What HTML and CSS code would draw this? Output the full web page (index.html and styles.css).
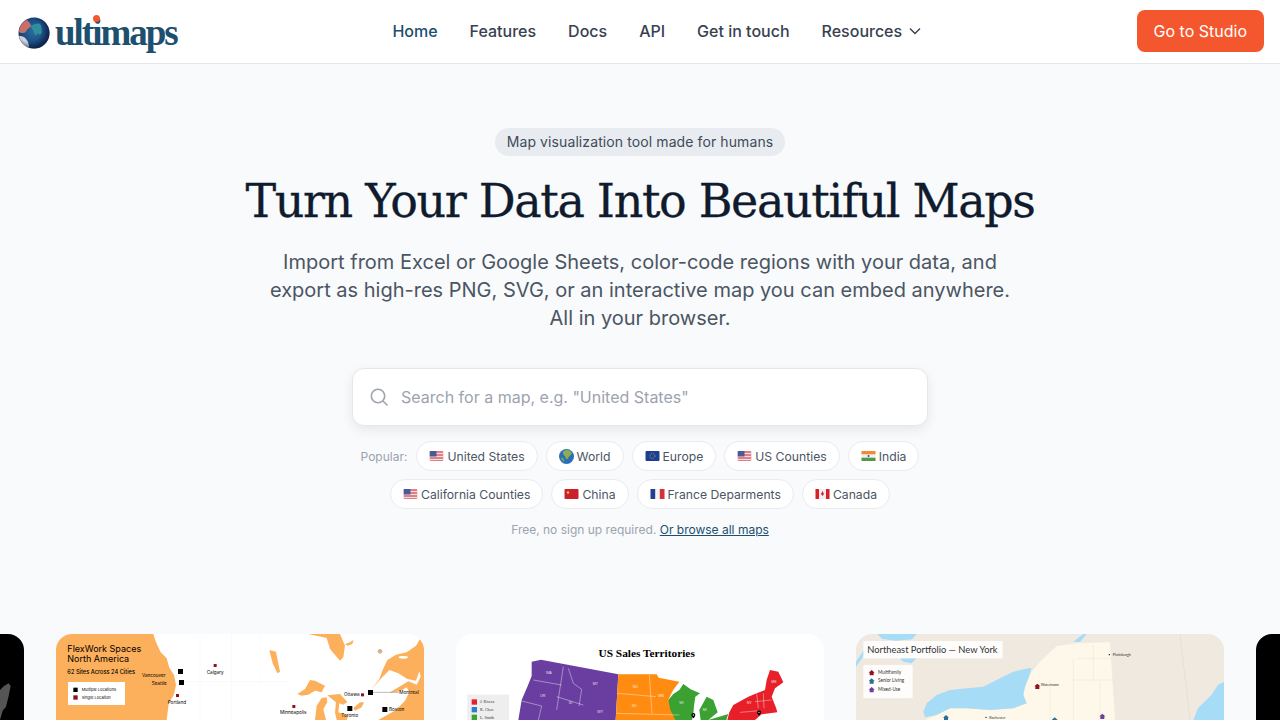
FILE: index.html
```html
<!DOCTYPE html>
<html>
<head>
  <meta charset="UTF-8">
  <title>Ultimaps</title>
  <link rel="stylesheet" href="styles.css">
</head>
<body>
  <svg class="defs" width="0" height="0">
    <defs>
      <symbol id="flag-us" viewBox="0 0 14 10">
        <rect width="14" height="10" rx="1" fill="#e07f88"/>
        <path d="M0 2.500h14M0 5.500h14M0 8.500h14" stroke="#f2dfe2" stroke-width="1.100"/>
        <rect width="7" height="5.500" fill="#4a5a96"/>
      </symbol>
      <radialGradient id="globe-fill" cx="50%" cy="45%" r="60%">
        <stop offset="0" stop-color="#2a6f98"/>
        <stop offset="0.65" stop-color="#1b4a86"/>
        <stop offset="1" stop-color="#122b55"/>
      </radialGradient>
      <radialGradient id="globe-shade" cx="35%" cy="40%" r="70%">
        <stop offset="0.55" stop-color="#0b1c3c" stop-opacity="0"/>
        <stop offset="1" stop-color="#0b1c3c" stop-opacity="0.85"/>
      </radialGradient>
    </defs>
  </svg>

  <header class="topbar">
    <a class="logo">
      <svg class="globe" width="32" height="32" viewBox="0 0 32 32">
        <circle cx="16" cy="16" r="15.500" fill="url(#globe-fill)"/>
        <path d="M1 15C1.500 9 5 4 9 3c2 2 4 4 4 6-1 2-3 2-4 4-1 2-2 3-4 3-1 0-3 0-4-1z" fill="#c96f68"/>
        <path d="M1 19c2 0 5 0 7 3 2 2 3 5 3 8.500C6 29 2 24 1 19z" fill="#cfd3d8"/>
        <path d="M13 9c3-2 6-3 9-2 2 2 1 5 2 8-1 3-3 3-5 1 0 2-1 3-2 2-1-2-1-4-2-5-1-1-2-2-2-4z" fill="#2f8f9f"/>
        <circle cx="16" cy="16" r="15.500" fill="url(#globe-shade)"/>
      </svg>
      <span class="wordmark">ultimaps<i class="logo-dot"></i></span>
    </a>
    <nav class="nav">
      <a class="active">Home</a>
      <a>Features</a>
      <a>Docs</a>
      <a>API</a>
      <a>Get in touch</a>
      <a class="has-caret">Resources
        <svg width="14" height="14" viewBox="0 0 14 14"><path d="M2 4.500l5 5 5-5" fill="none" stroke="#374151" stroke-width="1.400"/></svg>
      </a>
    </nav>
    <a class="studio-btn">Go to Studio</a>
  </header>

  <main>
    <section class="hero">
      <div class="badge">Map visualization tool made for humans</div>
      <h1>Turn Your Data Into Beautiful Maps</h1>
      <p class="lead">Import from Excel or Google Sheets, color-code regions with your data, and<br>export as high-res PNG, SVG, or an interactive map you can embed anywhere.<br>All in your browser.</p>

      <div class="search">
        <svg width="20" height="20" viewBox="0 0 20 20"><circle cx="9" cy="9" r="6.700" fill="none" stroke="#9ca3af" stroke-width="1.600"/><path d="M14 14l4.500 4.500" stroke="#9ca3af" stroke-width="1.600"/></svg>
        <span>Search for a map, e.g. "United States"</span>
      </div>

      <div class="chips">
        <span class="popular">Popular:</span>
        <a class="chip"><svg class="flag" viewBox="0 0 14 10"><use href="#flag-us"/></svg>United States</a>
        <a class="chip"><svg class="flag round" viewBox="0 0 14 14"><circle cx="7" cy="7" r="7" fill="#2a6fb8"/><path d="M4 2c3-2 7-1 8 2-1 2-3 3-4 5-1 1-2 0-2-2-1-1-3-2-2-5z" fill="#8fae4f"/><path d="M2 8c2 0 3 1 3 4-2-1-3-2-3-4z" fill="#7fa83f"/></svg>World</a>
        <a class="chip"><svg class="flag" viewBox="0 0 14 10"><rect width="14" height="10" rx="1" fill="#1c3f94"/><circle cx="7" cy="5" r="2.500" fill="none" stroke="#d9c23a" stroke-width=".7" stroke-dasharray="1 1"/></svg>Europe</a>
        <a class="chip"><svg class="flag" viewBox="0 0 14 10"><use href="#flag-us"/></svg>US Counties</a>
        <a class="chip"><svg class="flag" viewBox="0 0 14 10"><rect width="14" height="10" rx="1" fill="#f4f1ea"/><rect width="14" height="3.300" fill="#f08a38"/><rect y="6.700" width="14" height="3.300" fill="#4f9a4a"/><circle cx="7" cy="5" r="1" fill="#3a4f8f"/></svg>India</a>
      </div>
      <div class="chips second">
        <a class="chip"><svg class="flag" viewBox="0 0 14 10"><use href="#flag-us"/></svg>California Counties</a>
        <a class="chip"><svg class="flag" viewBox="0 0 14 10"><rect width="14" height="10" rx="1" fill="#c9202c"/><circle cx="3.500" cy="3.500" r="1.200" fill="#ecc53a"/></svg>China</a>
        <a class="chip"><svg class="flag" viewBox="0 0 14 10"><rect width="14" height="10" rx="1" fill="#f5f2f2"/><rect width="4.700" height="10" fill="#21408f"/><rect x="9.300" width="4.700" height="10" fill="#d8303a"/></svg>France Deparments</a>
        <a class="chip"><svg class="flag" viewBox="0 0 14 10"><rect width="14" height="10" rx="1" fill="#f5eeee"/><rect width="3.500" height="10" fill="#d9202a"/><rect x="10.500" width="3.500" height="10" fill="#d9202a"/><path d="M7 2l1.500 3-1.500 2-1.500-2z" fill="#d9202a"/></svg>Canada</a>
      </div>

      <p class="note">Free, no sign up required. <a>Or browse all maps</a></p>
    </section>

    <section class="gallery">
      <div class="card black">
        <svg class="map" viewBox="-1032 27 1104 258"><path d="M0 285V195l12-12 14-8 6 8-6 30-8 32-10 12-8 28z" fill="#555"/></svg>
      </div>

      <div class="card">
        <svg class="map" viewBox="168 27 1104 258">
          <rect x="168" y="27" width="1104" height="258" fill="#fff"/>
          <path d="M520 170H860M600 27v258M780 27v150M695 27v258" stroke="#f4f4f4" fill="none" stroke-width="1.500"/>
          <g fill="#fdb05c">
            <path d="M168 27H460l8 25 14 30 18 18 8 28 14 22 6 30-6 28-16 28-6 49H168z"/>
            <path d="M808 75l20 5 12 60-8 5-14-30z"/>
            <g transform="translate(870 27)">
              <path d="M55 0L110 12 120 45 150 80 160 70 165 35 150 0z"/>
              <path d="M165 30l12-4 14-8-4 12-15 5z"/>
              <path d="M392 12L378 35 350 55 318 62 292 78 278 108 268 135 245 165 272 135 298 108 325 118 352 135 378 140 388 112 392 128 380 152 355 142 325 160 298 176 330 172 350 160 358 175 345 200 318 228 265 258H402V12z"/>
              <path d="M22 180L45 165 60 138 75 140 105 155 95 175 75 170 55 182 35 185z"/>
              <path d="M75 258L80 215 95 192 110 190 112 205 100 225 108 258z"/>
              <path d="M112 184L150 180 172 204 160 212 148 208 145 235 175 245 170 258H140L135 235 138 205z"/>
              <path d="M190 222L210 205 222 205 215 220 195 230z"/>
            </g>
          </g>
          <circle cx="1140" cy="79" r="7" fill="#d9b48a"/>
          <ellipse cx="1210" cy="97" rx="14" ry="4" fill="#fff"/>
          <g class="t1">
            <text x="202" y="80" font-size="27">FlexWork Spaces</text>
            <text x="202" y="110" font-size="27">North America</text>
            <text x="202" y="148" font-size="17" font-weight="500">62 Sites Across 24 Cities</text>
          </g>
          <rect x="204" y="171" width="171" height="69" fill="#fff"/>
          <rect x="220" y="188" width="13" height="13"/>
          <rect x="220" y="211" width="13" height="13" fill="#8e1422"/>
          <g class="t1" font-size="12">
            <text x="245" y="198">Multiple Locations</text>
            <text x="245" y="221">Single Location</text>
            <text x="426" y="155" font-size="14">Vancouver</text>
            <text x="455" y="180" font-size="14">Seattle</text>
            <text x="503" y="236" font-size="14">Portland</text>
            <text x="620" y="146" font-size="14">Calgary</text>
            <text x="840" y="268" font-size="14">Minneapolis</text>
            <text x="1032" y="214" font-size="14">Ottawa</text>
            <text x="1198" y="206" font-size="14">Montreal</text>
            <text x="1024" y="277" font-size="14">Toronto</text>
            <text x="1167" y="259" font-size="14">Boston</text>
          </g>
          <g fill="#8e1422">
            <rect x="641" y="117" width="9" height="9"/>
            <rect x="528" y="207" width="9" height="9"/>
            <rect x="877" y="240" width="9" height="9"/>
            <rect x="1083" y="205" width="9" height="9"/>
          </g>
          <rect x="534" y="132" width="15" height="15"/>
          <rect x="537" y="165" width="15" height="15"/>
          <rect x="1104" y="195" width="15" height="15"/>
          <rect x="1042" y="243" width="15" height="15"/>
          <rect x="1147" y="246" width="15" height="15"/>
          <path d="M1119 202h80" stroke="#777" stroke-width="1.500"/>
        </svg>
      </div>

      <div class="card">
        <svg class="map" viewBox="18 27 1104 258">
          <rect x="18" y="27" width="1104" height="258" fill="#fff"/>
          <text class="t2" x="590" y="97" text-anchor="middle" font-size="34">US Sales Territories</text>
          <path d="M245 110l28-6 232 44-8 137H205l10-60 18-42 12-30z" fill="#6a3fa0"/>
          <path d="M505 148h115l6 10 62 12-18 24-15 30 25 36 10 25H497z" fill="#ff8c12"/>
          <path d="M655 225l15-18 18-12 12-18 22 16 28 12-14 10-4 28-2 25-4 17h-50l-15-30z" fill="#3ca234"/>
          <path d="M752 285l-4-30 22-40 20 10 13 37-28 23zM775 285l60-18-6 18z" fill="#3ca234"/>
          <path d="M832 285L838 262 850 240 895 215 920 205 945 195 950 165 960 135 985 140 1000 172 975 190 965 215 978 248 982 262 935 268 915 285z" fill="#e8202a"/>
          <g stroke="#fff" fill="none" stroke-width="1.500" opacity=".8">
            <path d="M250 165l85 15M340 125l-20 130M355 130l15 45 25 18-8 50M320 215l80 25M215 228l60 15-10 42M503 205l115 10M498 265l190 5M598 150l8 115"/>
            <path d="M920 205l5 45M940 205l2 45M915 230l50-5M870 262l60-5"/>
          </g>
          <g class="t3" font-size="11">
            <text x="288" y="148">WA</text><text x="270" y="216">OR</text><text x="428" y="179">MT</text>
            <text x="356" y="237">ID</text><text x="442" y="264">WY</text><text x="548" y="188">ND</text>
            <text x="545" y="245">SD</text><text x="625" y="215">MN</text><text x="688" y="237">WI</text>
            <text x="758" y="258">MI</text><text x="890" y="238">NY</text><text x="964" y="174">ME</text>
          </g>
          <rect x="52" y="209" width="125" height="76" fill="#eeeeee"/>
          <rect x="65" y="223" width="16" height="16" fill="#e8202a"/>
          <rect x="65" y="246" width="16" height="16" fill="#2b7fc9"/>
          <rect x="65" y="269" width="16" height="16" fill="#3ca234"/>
          <g class="t5" font-size="12">
            <text x="90" y="235">J. Rivera</text>
            <text x="90" y="258">K. Chen</text>
            <text x="90" y="281">L. Smith</text>
          </g>
          <path d="M730 264a6 6 0 0 1 6 6c0 4-6 10-6 10s-6-6-6-10a6 6 0 0 1 6-6zM927 256a6 6 0 0 1 6 6c0 4-6 10-6 10s-6-6-6-10a6 6 0 0 1 6-6z"/>
          <circle cx="730" cy="270" r="2" fill="#fff"/><circle cx="927" cy="262" r="2" fill="#fff"/>
        </svg>
      </div>

      <div class="card">
        <svg class="map" viewBox="18 27 1104 258">
          <rect x="18" y="27" width="1104" height="258" fill="#efe9df"/>
          <path d="M82 27h118l-14 16-50 4-40-6zM18 110l30-45 6 10-36 50zM150 100h50l-15 15-25-5zM670 50l30-23h10l-20 24z" fill="#a6dcf6"/>
          <path d="M1122 170l-18 10-20 30-40 40-14 35h92z" fill="#a6dcf6"/>
          <path d="M680 55L620 63 575 105 545 140 525 185 520 210 530 235 490 250 420 255 350 250 300 250 260 270 225 285H795L780 52z" fill="#fdf8ea"/>
          <path d="M220 260L230 235 260 210 300 195 350 190 400 185 450 160 490 140 535 130 545 130 535 160 525 185 520 210 530 235 490 250 420 255 350 250 300 250 260 270 225 277z" fill="#a6dcf6"/>
          <path d="M680 100h110M670 165h120M730 60v110M600 165v120M670 100v185M750 170v115" stroke="#ece5d3" fill="none" stroke-width="1.500"/>
          <path d="M990 27l30 258" stroke="#ddd6c8" fill="none" stroke-width="1.500"/>
          <rect x="40" y="48" width="418" height="52" fill="#fff" opacity=".9"/>
          <text class="t4" x="52" y="84" font-size="28">Northeast Portfolio — New York</text>
          <rect x="40" y="120" width="148" height="100" rx="4" fill="#fff" opacity=".9"/>
          <g class="t4" font-size="14">
            <text x="84" y="147">Multifamily</text>
            <text x="84" y="172">Senior Living</text>
            <text x="84" y="198">Mixed-Use</text>
            <text x="788" y="93" font-size="11">Plattsburgh</text>
            <text x="572" y="183" font-size="11">Watertown</text>
            <text x="418" y="281" font-size="11">Rochester</text>
          </g>
          <circle cx="778" cy="89" r="2"/><circle cx="408" cy="277" r="2"/>
          <path d="M65 135l9 8h-3v8h-12v-8h-3z" fill="#8e1422"/>
          <path d="M65 160l9 8h-3v8h-12v-8h-3z" fill="#27709c"/>
          <path d="M65 186l9 8h-3v8h-12v-8h-3z" fill="#6a3fa0"/>
          <path d="M562 176l9 8h-3v8h-12v-8h-3z" fill="#8e1422"/>
          <path d="M288 270l9 8h-3v8h-12v-8h-3z" fill="#27709c"/>
          <path d="M614 277l9 8h-18z" fill="#27709c"/>
          <path d="M757 266l9 8h-3v8h-12v-8h-3z" fill="#6a3fa0"/>
        </svg>
      </div>

      <div class="card black"></div>
    </section>
  </main>
</body>
</html>
```

FILE: styles.css
```css
* {
  box-sizing: border-box;
}
body {
  margin: 0;
  background-color: #f8fafc;
  color: #111827;
  font-family: Inter, "Noto Sans", sans-serif;
}
.defs {
  position: absolute;
}
a {
  color: inherit;
  text-decoration: none;
}

/* top bar */
.topbar {
  height: 64px;
  display: flex;
  justify-content: space-between;
  align-items: center;
  padding: 0 16px 1px 18px;
  background-color: #fff;
  border-bottom: 1px solid #e5e7eb;
}
.logo {
  width: 160px;
  display: flex;
  align-items: center;
  gap: 5px;
  padding-top: 4px;
}
.globe {
  flex: none;
}
.wordmark {
  position: relative;
  color: #1d4f6e;
  font-family: "Liberation Serif", serif;
  font-weight: 700;
  font-size: 37px;
  line-height: 40px;
  letter-spacing: -2px;
}
.logo-dot {
  position: absolute;
  left: 38px;
  top: 2px;
  width: 7px;
  height: 7px;
  border-radius: 50%;
  background-color: #f4572e;
}
.nav {
  display: flex;
  gap: 32px;
  color: #374151;
  font-size: 16px;
  font-weight: 500;
}
.nav .active {
  color: #1d4f6e;
}
.has-caret {
  display: flex;
  align-items: center;
  gap: 6px;
}
.studio-btn {
  height: 42px;
  padding: 0 17px;
  border-radius: 8px;
  background-color: #f4572e;
  color: #fff;
  font-size: 16px;
  line-height: 42px;
}

/* hero */
.hero {
  display: flex;
  flex-direction: column;
  align-items: center;
  padding-top: 64px;
  text-align: center;
}
.badge {
  height: 28px;
  padding: 0 12px;
  border-radius: 14px;
  background-color: #e8ebf0;
  color: #414b5a;
  font-size: 14px;
  line-height: 28px;
  letter-spacing: 0.1px;
}
h1 {
  margin: 13px 0 0;
  color: #111b2e;
  font-family: "DejaVu Serif", serif;
  font-size: 46px;
  font-weight: 400;
  line-height: 64px;
  letter-spacing: -1.35px;
  -webkit-text-stroke: 0.3px #111b2e;
}
.lead {
  margin: 15px 0 0;
  color: #4b5563;
  font-size: 20px;
  line-height: 28px;
}
.search {
  width: 576px;
  height: 58px;
  margin-top: 36px;
  display: flex;
  align-items: center;
  gap: 12px;
  padding: 0 16px;
  background-color: #fff;
  border: 1px solid #e5e7eb;
  border-radius: 12px;
  box-shadow: 0 4px 12px rgba(0, 0, 0, 0.08);
  color: #9ca3af;
  font-size: 16px;
}
.chips {
  margin-top: 15px;
  display: flex;
  justify-content: center;
  align-items: center;
  gap: 8px;
}
.chips.second {
  margin-top: 8px;
}
.popular {
  margin-right: 1px;
  color: #9ca3af;
  font-size: 12px;
}
.chip {
  height: 30px;
  display: flex;
  align-items: center;
  gap: 3px;
  padding: 0 12px;
  background-color: #fff;
  border: 1px solid #e9ebef;
  border-radius: 15px;
  color: #4b5563;
  font-size: 12.2px;
}
.flag {
  width: 15px;
  height: 10px;
}
.flag.round {
  height: 15px;
}
.note {
  margin: 13px 0 0;
  color: #9ca3af;
  font-size: 12px;
  line-height: 16px;
}
.note a {
  color: #1d4f6e;
  text-decoration: underline;
}

/* map cards */
.gallery {
  margin-top: 96px;
  display: flex;
  justify-content: center;
  gap: 32px;
  height: 86px;
  overflow: hidden;
}
.card {
  flex: 0 0 368px;
  height: 276px;
  border-radius: 16px;
  overflow: hidden;
  background-color: #fff;
}
.card.black {
  background-color: #000;
}
.map {
  display: block;
  width: 368px;
  height: 86px;
}
.t1 {
  font-family: Inter, sans-serif;
}
.t2 {
  font-family: "Liberation Serif", serif;
  font-weight: 700;
}
.t3 {
  fill: #fff;
  opacity: 0.8;
  font-family: "Liberation Sans", sans-serif;
}
.t4 {
  fill: #333;
  font-family: Lato, sans-serif;
}
.t5 {
  fill: #333;
  font-family: "Liberation Serif", serif;
}
```
